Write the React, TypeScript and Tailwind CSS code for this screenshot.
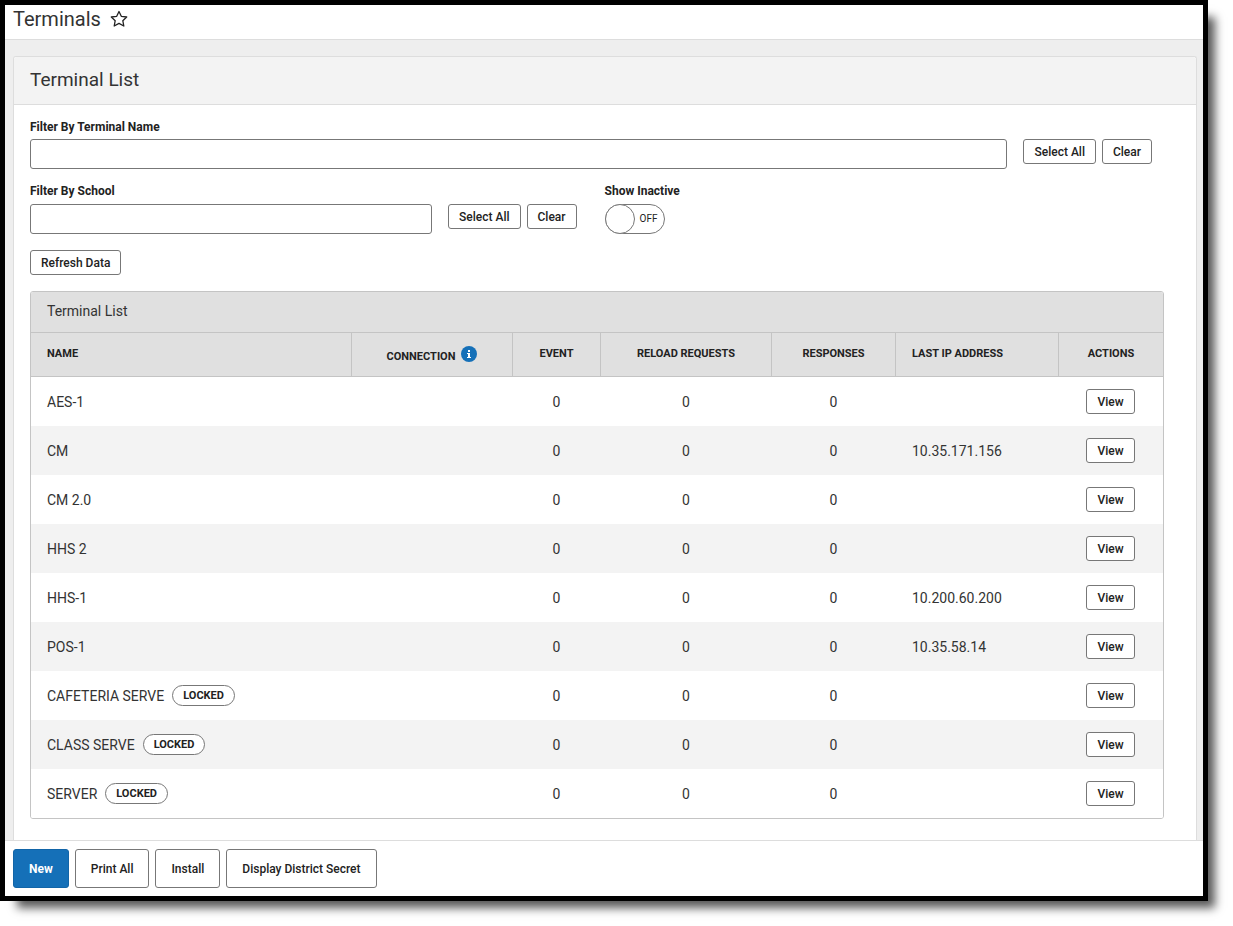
import React, { useState } from 'react';

interface Terminal {
  name: string;
  event: number;
  reloadRequests: number;
  responses: number;
  ip?: string;
  locked?: boolean;
}

const terminals: Terminal[] = [
  { name: 'AES-1', event: 0, reloadRequests: 0, responses: 0 },
  { name: 'CM', event: 0, reloadRequests: 0, responses: 0, ip: '10.35.171.156' },
  { name: 'CM 2.0', event: 0, reloadRequests: 0, responses: 0 },
  { name: 'HHS 2', event: 0, reloadRequests: 0, responses: 0 },
  { name: 'HHS-1', event: 0, reloadRequests: 0, responses: 0, ip: '10.200.60.200' },
  { name: 'POS-1', event: 0, reloadRequests: 0, responses: 0, ip: '10.35.58.14' },
  { name: 'CAFETERIA SERVE', event: 0, reloadRequests: 0, responses: 0, locked: true },
  { name: 'CLASS SERVE', event: 0, reloadRequests: 0, responses: 0, locked: true },
  { name: 'SERVER', event: 0, reloadRequests: 0, responses: 0, locked: true },
];

const SmallButton: React.FC<React.ButtonHTMLAttributes<HTMLButtonElement>> = ({ children, ...rest }) => (
  <button
    type="button"
    className="h-[25px] px-[10px] shrink-0 rounded-[3px] border border-[#777] bg-white text-xs font-medium text-[#222] whitespace-nowrap"
    {...rest}
  >
    {children}
  </button>
);

const FooterButton: React.FC<{ children: React.ReactNode; primary?: boolean }> = ({ children, primary }) => (
  <button
    type="button"
    className={`h-[39px] px-[15px] rounded-[3px] border text-xs whitespace-nowrap ${
      primary ? 'bg-[#1570b8] border-[#1265a8] text-white font-bold' : 'bg-white border-[#777] text-[#222] font-medium'
    }`}
  >
    {children}
  </button>
);

const StarIcon = () => (
  <svg width="18" height="18" viewBox="0 0 18 18" fill="none" stroke="#222" strokeWidth="1.3" strokeLinejoin="round">
    <path d="M9 1.5 L11.3 6.3 L16.7 7 L12.8 10.7 L13.8 16 L9 13.4 L4.2 16 L5.2 10.7 L1.3 7 L6.7 6.3 Z" />
  </svg>
);

const InfoIcon = () => (
  <svg width="16" height="16" viewBox="0 0 16 16">
    <circle cx="8" cy="8" r="8" fill="#1570b8" />
    <path d="M7 4h2v2H7zM6 7h3v4h1v1H6v-1h1V8H6z" fill="#fff" />
  </svg>
);

export default function App() {
  const [nameFilter, setNameFilter] = useState('');
  const [schoolFilter, setSchoolFilter] = useState('');
  const [showInactive, setShowInactive] = useState(false);

  return (
    <div className="min-h-screen bg-white pr-[25px] pb-[25px] font-['Roboto',sans-serif] text-[#222]">
      <div className="border-[5px] border-black bg-[#eee] shadow-[12px_12px_9px_-5px_rgba(0,0,0,0.65)]">
        {/* Page header */}
        <header className="flex items-center gap-[9px] h-[35px] px-2 pb-[6px] bg-white border-b border-[#ddd]">
          <h1 className="text-xl font-normal leading-7 text-[#333]">Terminals</h1>
          <button type="button" aria-label="Add to favorites">
            <StarIcon />
          </button>
        </header>

        <main className="pt-4 pl-2 pr-[6px]">
          <section className="bg-white border border-b-0 border-[#ddd] rounded-t-[3px]">
            <div className="h-12 px-4 pb-[2px] flex items-center bg-[#f3f3f3] border-b border-[#ddd] rounded-t-[3px]">
              <h2 className="text-[19px] font-normal leading-7 text-[#333]">Terminal List</h2>
            </div>

            <div className="pt-[14px] pl-4 pr-8 pb-[21px]">
              {/* Filters */}
              <label htmlFor="terminal-name" className="block text-xs font-bold leading-4 mb-1">
                Filter By Terminal Name
              </label>
              <div className="flex items-start pr-3">
                <input
                  id="terminal-name"
                  type="text"
                  value={nameFilter}
                  onChange={(e) => setNameFilter(e.target.value)}
                  className="flex-1 min-w-0 h-[30px] px-2 rounded-[3px] border border-[#777] bg-white text-sm"
                />
                <div className="flex gap-[6px] ml-4">
                  <SmallButton>Select All</SmallButton>
                  <SmallButton onClick={() => setNameFilter('')}>Clear</SmallButton>
                </div>
              </div>

              <div className="flex items-start gap-7 mt-[14px]">
                <div>
                  <label htmlFor="school" className="block text-xs font-bold leading-4 mb-[5px]">
                    Filter By School
                  </label>
                  <div className="flex items-start">
                    <input
                      id="school"
                      type="text"
                      value={schoolFilter}
                      onChange={(e) => setSchoolFilter(e.target.value)}
                      className="w-[402px] h-[30px] px-2 rounded-[3px] border border-[#777] bg-white text-sm"
                    />
                    <div className="flex gap-[6px] ml-4">
                      <SmallButton>Select All</SmallButton>
                      <SmallButton onClick={() => setSchoolFilter('')}>Clear</SmallButton>
                    </div>
                  </div>
                </div>
                <div>
                  <label htmlFor="inactive" className="block text-xs font-bold leading-4 mb-[5px]">
                    Show Inactive
                  </label>
                  <label className="relative flex items-center w-[60px] h-[30px] rounded-full border border-[#777] bg-white cursor-pointer has-checked:flex-row-reverse">
                    <input
                      id="inactive"
                      type="checkbox"
                      role="switch"
                      checked={showInactive}
                      onChange={(e) => setShowInactive(e.target.checked)}
                      className="absolute inset-0 opacity-0 cursor-pointer"
                    />
                    <span className="-m-px size-[30px] shrink-0 rounded-full border border-[#777] bg-white"></span>
                    <span className="flex-1 text-center text-[10px] leading-3">{showInactive ? 'ON' : 'OFF'}</span>
                  </label>
                </div>
              </div>

              <div className="flex mt-4 mb-4">
                <SmallButton>Refresh Data</SmallButton>
              </div>

              {/* Terminal table */}
              <div className="border border-[#c4c4c4] rounded-[3px] overflow-hidden">
                <h3 className="h-10 px-4 pb-[2px] flex items-center text-sm font-normal text-[#333] bg-[#e0e0e0]">Terminal List</h3>
                <table className="w-full table-fixed border-separate border-spacing-0 text-sm">
                  <colgroup>
                    <col />
                    <col className="w-[161px]" />
                    <col className="w-[88px]" />
                    <col className="w-[171px]" />
                    <col className="w-[124px]" />
                    <col className="w-[163px]" />
                    <col className="w-[104px]" />
                  </colgroup>
                  <thead>
                    <tr className="h-[45px] bg-[#e0e0e0] text-[11px] leading-4 uppercase *:font-bold *:border-y *:border-r *:border-[#c4c4c4] *:last:border-r-0">
                      <th className="px-4 pb-[2px] text-left">Name</th>
                      <th className="pb-[2px]">
                        <span className="flex items-end justify-center gap-[6px] leading-[10px]">
                          Connection <InfoIcon />
                        </span>
                      </th>
                      <th className="pb-[2px]">Event</th>
                      <th className="pb-[2px]">Reload Requests</th>
                      <th className="pb-[2px]">Responses</th>
                      <th className="px-4 pb-[2px] text-left">Last IP Address</th>
                      <th className="pb-[2px]">Actions</th>
                    </tr>
                  </thead>
                  <tbody>
                    {terminals.map((t) => (
                      <tr key={t.name} className="h-[49px] bg-white text-[#333] even:bg-[#f3f3f3] *:border-r *:border-transparent">
                        <td className="px-4">
                          <div className="flex items-center gap-2">
                            {t.name}
                            {t.locked && (
                              <span className="h-[21px] px-[10px] flex items-center rounded-full border border-[#777] bg-white text-[11px] font-bold text-[#222]">
                                LOCKED
                              </span>
                            )}
                          </div>
                        </td>
                        <td></td>
                        <td className="text-center">{t.event}</td>
                        <td className="text-center">{t.reloadRequests}</td>
                        <td className="text-center">{t.responses}</td>
                        <td className="px-4">{t.ip}</td>
                        <td className="text-center">
                          <SmallButton>View</SmallButton>
                        </td>
                      </tr>
                    ))}
                  </tbody>
                </table>
              </div>
            </div>
          </section>
        </main>

        {/* Action bar */}
        <footer className="flex gap-[6px] p-2 bg-white border-t border-[#ddd]">
          <FooterButton primary>New</FooterButton>
          <FooterButton>Print All</FooterButton>
          <FooterButton>Install</FooterButton>
          <FooterButton>Display District Secret</FooterButton>
        </footer>
      </div>
    </div>
  );
}
